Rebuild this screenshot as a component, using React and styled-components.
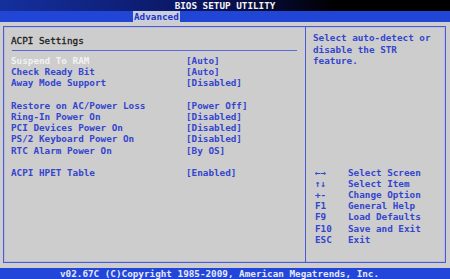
import React from 'react';
import styled, { createGlobalStyle } from 'styled-components';

const Global = createGlobalStyle`
  html, body { margin: 0; padding: 0; background: #cdcdcd; }
  body { font-family: "DejaVu Sans Mono", "Liberation Mono", monospace; }
`

const items = [
    { label: 'Suspend To RAM', value: '[Auto]', selected: true },
    { label: 'Check Ready Bit', value: '[Auto]' },
    { label: 'Away Mode Support', value: '[Disabled]' },
    null,
    { label: 'Restore on AC/Power Loss', value: '[Power Off]' },
    { label: 'Ring-In Power On', value: '[Disabled]' },
    { label: 'PCI Devices Power On', value: '[Disabled]' },
    { label: 'PS/2 Keyboard Power On', value: '[Disabled]' },
    { label: 'RTC Alarm Power On', value: '[By OS]' },
    null,
    { label: 'ACPI HPET Table', value: '[Enabled]' },
]

const keys = [
    ['\u2190\u2192', 'Select Screen'],
    ['\u2191\u2193', 'Select Item'],
    ['+-', 'Change Option'],
    ['F1', 'General Help'],
    ['F9', 'Load Defaults'],
    ['F10', 'Save and Exit'],
    ['ESC', 'Exit'],
]

function App() {
    return (
        <Screen>
            <Global />
            <TitleBar>BIOS SETUP UTILITY</TitleBar>
            <TabBar>
                <Tab>Advanced</Tab>
            </TabBar>
            <Main>
                <Frame>
                    <Settings>
                        <Heading>ACPI Settings</Heading>
                        <Rule />
                        {items.map((item, i) =>
                            item ? (
                                <Row key={i}>
                                    <Label selected={item.selected}>{item.label}</Label>
                                    <Value>{item.value}</Value>
                                </Row>
                            ) : (
                                <Row key={i} />
                            )
                        )}
                    </Settings>
                    <Help>
                        <HelpText>
                            Select auto-detect or<br />
                            disable the STR<br />
                            feature.
                        </HelpText>
                        <Keys>
                            {keys.map(([k, d]) => (
                                <KeyRow key={k}>
                                    <Key>{k}</Key>
                                    <span>{d}</span>
                                </KeyRow>
                            ))}
                        </Keys>
                    </Help>
                </Frame>
            </Main>
            <Footer>v02.67C (C)Copyright 1985-2009, American Megatrends, Inc.</Footer>
        </Screen>
    );
}

const Screen = styled.div`
    width: 450px;
    height: 279px;
    display: flex;
    flex-direction: column;
    overflow: hidden;
    font-family: "DejaVu Sans Mono", "Liberation Mono", monospace;
    font-size: 9.3px;
    font-weight: bold;
    letter-spacing: 0;
`

const TitleBar = styled.div`
    height: 11px;
    line-height: 12px;
    background: linear-gradient(to right, #15309e 0%, #0a1560 45%, #000 75%);
    color: #f4f4f4;
    text-align: center;
    padding-left: 0;
`

const TabBar = styled.div`
    height: 11px;
    background: #2146d6;
    padding-left: 133px;
    display: flex;
`

const Tab = styled.div`
    background: #c9cde0;
    color: #1a36c4;
    line-height: 11px;
    padding: 0 1px;
`

const Main = styled.div`
    flex: 1;
    background: #cdcdcd;
    padding: 4px 4px 5px 3px;
    display: flex;
`

const Frame = styled.div`
    flex: 1;
    display: flex;
    border: 1px solid #4a5ad4;
    box-shadow: inset 0 0 0 1px #b8bcd8;
`

const Settings = styled.div`
    width: 301px;
    border-right: 1px solid #4a5ad4;
    padding: 7.5px 0 0 7px;
    box-sizing: border-box;
    width: 302px;
    color: #3445cf;
`

const Heading = styled.div`
    color: #1a1a1a;
    line-height: 11.2px;
    font-weight: normal;
    -webkit-text-stroke: 0.3px #1a1a1a;
`

const Rule = styled.div`
    height: 1px;
    background: #5a6ad8;
    margin: 4px 8px 4.4px 1px;
`

const Row = styled.div`
    display: flex;
    height: 11.2px;
    line-height: 11.2px;
    white-space: pre;
`

const Label = styled.span`
    width: 175px;
    color: ${p => (p.selected ? '#f2f2f2' : '#3445cf')};
`

const Value = styled.span`
    color: #3445cf;
`

const Help = styled.div`
    flex: 1;
    display: flex;
    flex-direction: column;
    padding: 5.4px 0 17px 7px;
    color: #3445cf;
`

const HelpText = styled.div`
    line-height: 11.5px;
`

const Keys = styled.div`
    margin-top: auto;
    padding-left: 2px;
`

const KeyRow = styled.div`
    display: flex;
    height: 11.2px;
    line-height: 11.2px;
`

const Key = styled.span`
    width: 33px;
`

const Footer = styled.div`
    height: 11px;
    line-height: 11px;
    background: #2245da;
    color: #e4e8f4;
    padding-left: 60px;
    white-space: pre;
`

export default App;
